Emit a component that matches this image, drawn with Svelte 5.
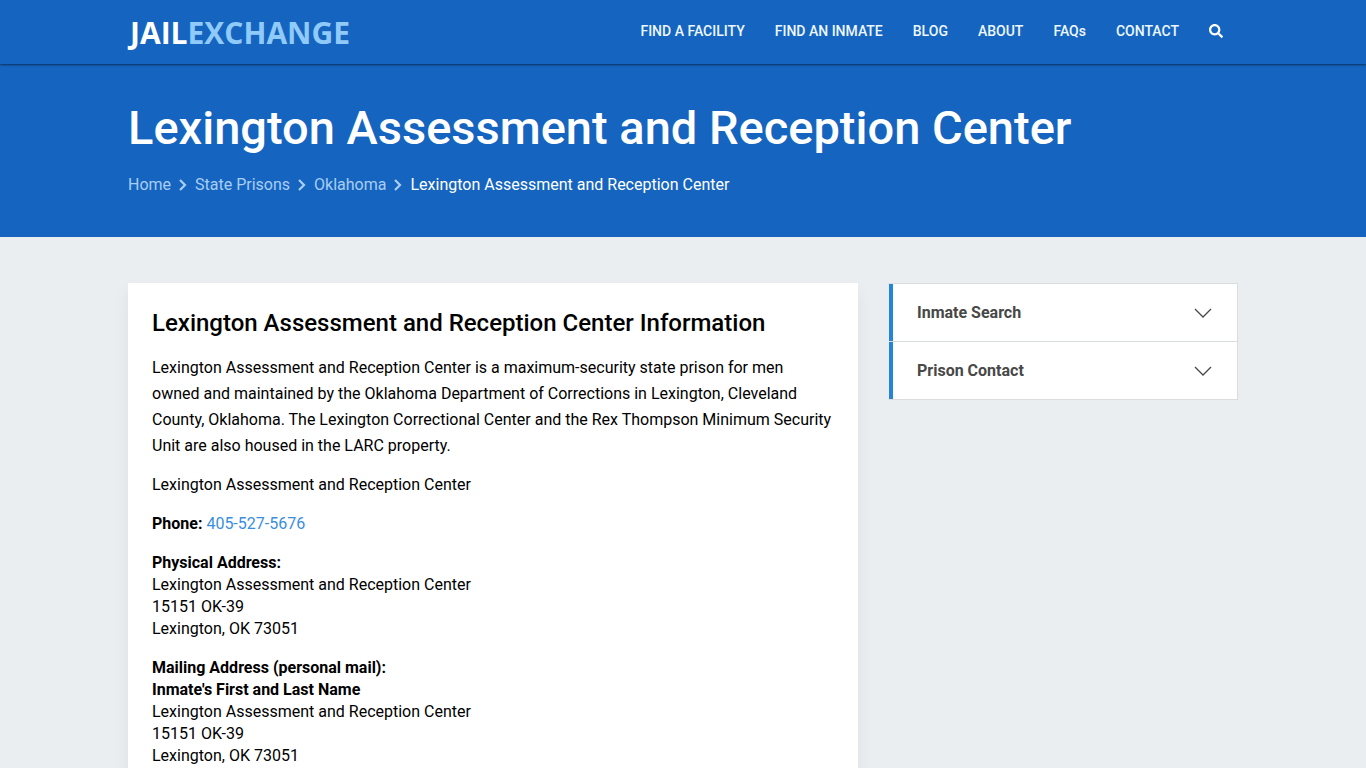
<script>
  const nav = ['FIND A FACILITY', 'FIND AN INMATE', 'BLOG', 'ABOUT', 'FAQs', 'CONTACT'];
  const crumbs = ['Home', 'State Prisons', 'Oklahoma'];
  const facility = 'Lexington Assessment and Reception Center';
  let panels = $state([
    { title: 'Inmate Search', open: false },
    { title: 'Prison Contact', open: false }
  ]);
</script>

<header class="topbar">
  <div class="container bar">
    <a class="logo" href="#home">JAIL<span>EXCHANGE</span></a>
    <nav>
      {#each nav as item}
        <a href="#nav">{item}</a>
      {/each}
      <button class="search" aria-label="Search">
        <svg viewBox="0 0 512 512" width="14" height="14" aria-hidden="true">
          <path fill="currentColor" d="M505 442.700L405.300 343c-4.500-4.500-10.600-7-17-7H372c27.600-35.300 44-79.700 44-128C416 93.100 322.900 0 208 0S0 93.100 0 208s93.100 208 208 208c48.300 0 92.700-16.400 128-44v16.300c0 6.400 2.500 12.500 7 17l99.700 99.700c9.400 9.400 24.600 9.400 33.900 0l28.300-28.300c9.400-9.400 9.400-24.600.1-34zM208 336c-70.700 0-128-57.200-128-128 0-70.700 57.200-128 128-128 70.700 0 128 57.200 128 128 0 70.700-57.200 128-128 128z" />
        </svg>
      </button>
    </nav>
  </div>
</header>

<section class="hero">
  <div class="container">
    <h1>{facility}</h1>
    <nav class="crumbs" aria-label="Breadcrumb">
      {#each crumbs as crumb}
        <a href="#crumb">{crumb}</a>
        <svg viewBox="0 0 8 12" width="8" height="12" aria-hidden="true">
          <path d="M1 1l5 5-5 5" fill="none" stroke="currentColor" stroke-width="2.200" />
        </svg>
      {/each}
      <span>{facility}</span>
    </nav>
  </div>
</section>

<main class="container columns">
  <article>
    <h2>{facility} Information</h2>
    <p class="intro">
      {facility} is a maximum-security state prison for men owned and maintained by the Oklahoma
      Department of Corrections in Lexington, Cleveland County, Oklahoma. The Lexington Correctional
      Center and the Rex Thompson Minimum Security Unit are also housed in the LARC property.
    </p>
    <p>{facility}</p>
    <p><strong>Phone:</strong> <a href="tel:405-527-5676">405-527-5676</a></p>
    <p>
      <strong>Physical Address:</strong><br />
      {facility}<br />
      15151 OK-39<br />
      Lexington, OK 73051
    </p>
    <p>
      <strong>Mailing Address (personal mail):</strong><br />
      <strong>Inmate's First and Last Name</strong><br />
      {facility}<br />
      15151 OK-39<br />
      Lexington, OK 73051
    </p>
  </article>

  <aside>
    {#each panels as panel}
      <button class="panel" aria-expanded={panel.open} onclick={() => (panel.open = !panel.open)}>
        {panel.title}
        <svg viewBox="0 0 18 10" width="18" height="10" aria-hidden="true">
          <path d="M1 1l8 8 8-8" fill="none" stroke="currentColor" stroke-width="1.300" />
        </svg>
      </button>
    {/each}
  </aside>
</main>

<style>
  :global(body) {
    margin: 0;
    background: #eaeef1;
    color: #000;
    font: 16px/22px Roboto, sans-serif;
  }
  .container {
    box-sizing: border-box;
    max-width: 1140px;
    margin: 0 auto;
    padding: 0 15px;
  }
  a {
    color: inherit;
    text-decoration: none;
  }
  button {
    font: inherit;
    color: inherit;
    cursor: pointer;
  }
  .topbar {
    position: relative;
    background: #1565c0;
    color: #fff;
    box-shadow: 0 1px 2px rgba(0, 0, 0, 0.55);
  }
  .bar {
    display: flex;
    align-items: center;
    justify-content: space-between;
    height: 64px;
  }
  .logo {
    padding: 2px 0 0 2px;
    font: 700 30px/40px 'Open Sans', sans-serif;
  }
  .logo span {
    color: #90caf9;
  }
  .bar nav {
    display: flex;
    align-items: center;
    gap: 30px;
    padding: 0 15px 2px 0;
    font-size: 14px;
    font-weight: 500;
    color: #eef7ff;
  }
  .search {
    display: flex;
    padding: 0;
    border: 0;
    background: none;
    color: #fff;
  }
  .hero {
    padding: 34px 0 41px;
    background: #1565c0;
    color: #fff;
  }
  h1 {
    margin: 0 0 16px;
    font-size: 47px;
    line-height: 60px;
    font-weight: 500;
  }
  .crumbs {
    display: flex;
    align-items: center;
    gap: 8px;
    color: #fff;
  }
  .crumbs a,
  .crumbs svg {
    color: #a9cdf3;
  }
  .columns {
    display: grid;
    grid-template-columns: minmax(0, 730fr) minmax(0, 350fr);
    align-items: start;
    gap: 30px;
    padding-top: 46px;
    padding-bottom: 46px;
  }
  article {
    padding: 24px;
    background: #fff;
    box-shadow: 0 8px 16px rgba(0, 0, 0, 0.06);
  }
  h2 {
    margin: 0 0 16px;
    font-size: 24px;
    line-height: 32px;
    font-weight: 500;
  }
  p {
    margin: 0 0 17px;
  }
  p.intro {
    margin-bottom: 15px;
    line-height: 26px;
  }
  strong {
    font-weight: 700;
  }
  article a {
    color: #3a8ee0;
  }
  aside {
    display: grid;
    gap: 1px;
    border: 1px solid #d9dde0;
    border-left-color: #eaeef1;
    background: #d9dde0;
  }
  .panel {
    display: flex;
    align-items: center;
    justify-content: space-between;
    padding: 18px 25px 17px 24px;
    border: 0;
    border-left: 4px solid #2484d8;
    background: #fff;
    color: #484848;
    font-weight: 700;
  }
</style>
